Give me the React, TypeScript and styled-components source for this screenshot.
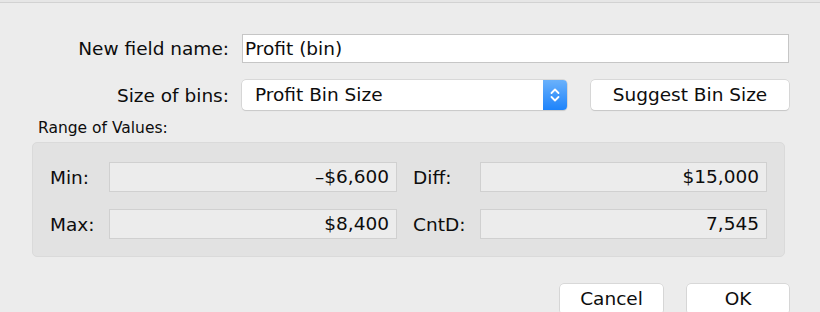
import React from 'react';
import styled, { createGlobalStyle } from 'styled-components';

const GlobalStyle = createGlobalStyle`
  html, body {
    margin: 0;
    padding: 0;
    background: #ececec;
  }
  body {
    font-family: "DejaVu Sans", "Liberation Sans", sans-serif;
    color: #0d0d0d;
  }
`;

const Dialog = styled.div`
  width: 820px;
  height: 310px;
  overflow: hidden;
  box-sizing: border-box;
  background: #ececec;
  border-top: 1px solid #d2d2d2;
  margin-top: 2px;
  box-shadow: 0 -2px 0 #e6e6e6;
`;

const Form = styled.div`
  display: grid;
  grid-template-columns: 229px 547px;
  column-gap: 13px;
  row-gap: 17px;
  padding-top: 31px;
  align-items: center;
`;

const Label = styled.label`
  font-size: 18.5px;
  text-align: right;
  white-space: nowrap;
`;

const TextInput = styled.div`
  height: 29px;
  box-sizing: border-box;
  background: #fff;
  border: 1px solid #c6c6c6;
  font-size: 18.5px;
  line-height: 27px;
  padding-left: 2px;
`;

const SelectRow = styled.div`
  display: flex;
  align-items: center;
  justify-content: space-between;
`;

const Select = styled.div`
  width: 325px;
  height: 30px;
  box-sizing: border-box;
  display: flex;
  background: #fff;
  border-radius: 4px;
  box-shadow: 0 0 0 0.5px #c4c4c4, 0 1px 1px rgba(0, 0, 0, 0.12);
  overflow: hidden;
`;

const SelectText = styled.div`
  flex: 1;
  font-size: 18.5px;
  line-height: 30px;
  padding-left: 13px;
`;

const SelectArrow = styled.div`
  width: 24px;
  display: flex;
  align-items: center;
  justify-content: center;
  background: linear-gradient(#6ab1fb, #1d83fb);
`;

const Button = styled.button<{ $width: number }>`
  width: ${p => p.$width}px;
  height: 30px;
  box-sizing: border-box;
  background: #fff;
  border: none;
  border-radius: 4px;
  box-shadow: 0 0 0 0.5px #c4c4c4, 0 1px 1px rgba(0, 0, 0, 0.14);
  font-family: inherit;
  font-size: 18.5px;
  line-height: 30px;
  color: #0d0d0d;
  padding: 0;
`;

const RangeCaption = styled.div`
  font-size: 15.5px;
  line-height: 18px;
  margin: 9px 0 0 38px;
`;

const Group = styled.div`
  width: 753px;
  margin: 5px 0 0 32px;
  box-sizing: border-box;
  background: #e2e2e2;
  border: 1px solid #dadada;
  border-radius: 5px;
  display: grid;
  grid-template-columns: 59px 288px 16px 67px 287px;
  row-gap: 17px;
  padding: 19px 0 17px 17px;
  align-items: center;
`;

const RangeLabel = styled.div`
  font-size: 18.5px;
`;

const ValueBox = styled.div`
  height: 30px;
  box-sizing: border-box;
  background: #ececec;
  border: 1px solid #d0d0d0;
  font-size: 18.5px;
  line-height: 28px;
  text-align: right;
  padding-right: 7px;
`;

const Footer = styled.div`
  display: flex;
  justify-content: flex-end;
  gap: 24px;
  padding: 27px 31px 0 0;
`;

const Chevrons = () => (
  <svg width="12" height="20" viewBox="0 0 12 20">
    <path d="M2.5 8 L6 4.5 L9.5 8" fill="none" stroke="#fff" strokeWidth="1.8" strokeLinecap="round" strokeLinejoin="round" />
    <path d="M2.5 12 L6 15.5 L9.5 12" fill="none" stroke="#fff" strokeWidth="1.8" strokeLinecap="round" strokeLinejoin="round" />
  </svg>
);

const ranges = [
  { left: 'Min:', leftValue: '–$6,600', right: 'Diff:', rightValue: '$15,000' },
  { left: 'Max:', leftValue: '$8,400', right: 'CntD:', rightValue: '7,545' },
];

export default function App() {
  return (
    <>
      <GlobalStyle />
      <Dialog>
        <Form>
          <Label>New field name:</Label>
          <TextInput>Profit (bin)</TextInput>
          <Label>Size of bins:</Label>
          <SelectRow>
            <Select>
              <SelectText>Profit Bin Size</SelectText>
              <SelectArrow>
                <Chevrons />
              </SelectArrow>
            </Select>
            <Button $width={198}>Suggest Bin Size</Button>
          </SelectRow>
        </Form>
        <RangeCaption>Range of Values:</RangeCaption>
        <Group>
          {ranges.map(r => (
            <React.Fragment key={r.left}>
              <RangeLabel>{r.left}</RangeLabel>
              <ValueBox>{r.leftValue}</ValueBox>
              <span />
              <RangeLabel>{r.right}</RangeLabel>
              <ValueBox>{r.rightValue}</ValueBox>
            </React.Fragment>
          ))}
        </Group>
        <Footer>
          <Button $width={103}>Cancel</Button>
          <Button $width={102}>OK</Button>
        </Footer>
      </Dialog>
    </>
  );
}
